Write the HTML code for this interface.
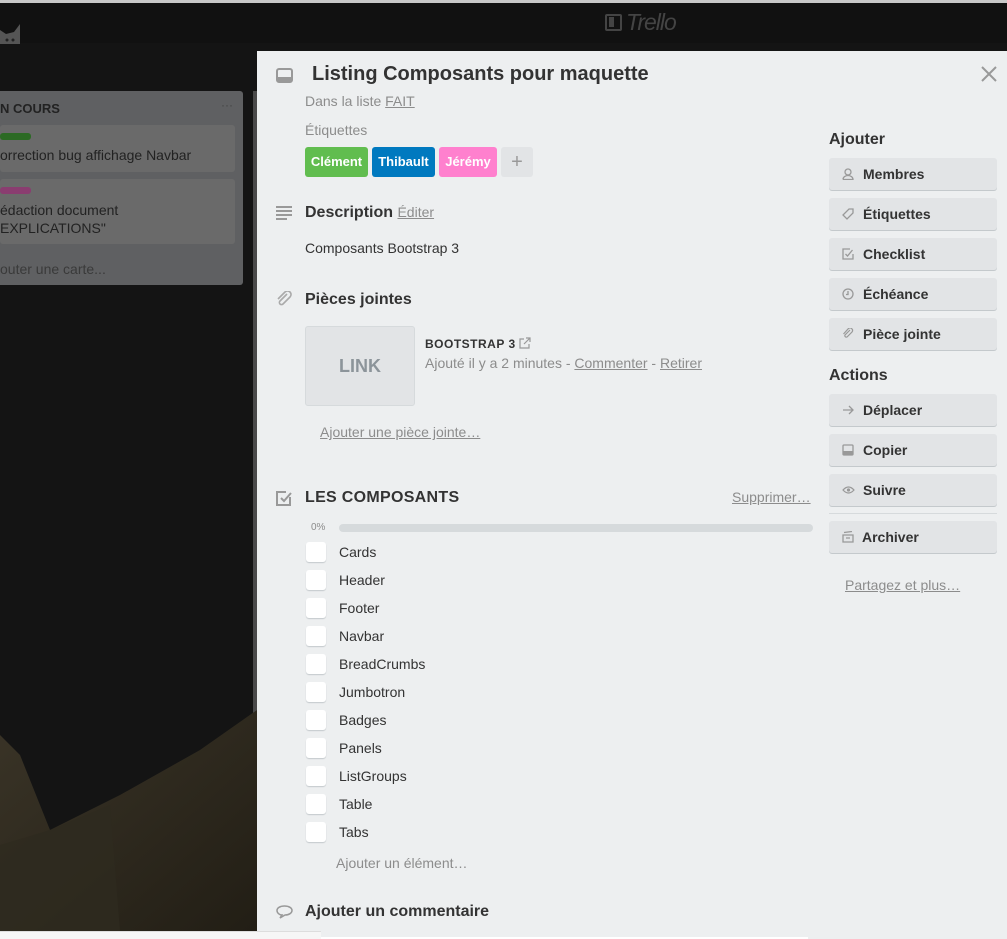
<!DOCTYPE html>
<html><head><meta charset="utf-8"><style>
*{box-sizing:border-box;margin:0;padding:0}
body{width:1007px;height:939px;overflow:hidden;background:#141414;font-family:"Liberation Sans",Arial,sans-serif;position:relative;color:#333}
.a{position:absolute}
.modal{left:257px;top:51px;width:750px;height:888px;background:#edeff0}
.btn{position:absolute;left:829px;width:168px;height:32px;background:#e2e4e6;border-radius:3px;box-shadow:0 1px 0 #c4c9cc;font-weight:bold;font-size:14px;color:#333;line-height:32px;padding-left:34px}
.btn svg{position:absolute;left:13px;top:10px}
.cb{position:absolute;left:306px;width:20px;height:20px;background:#fff;border-radius:3px;box-shadow:0 1px 1px #c4c9cc}
.it{position:absolute;left:339px;font-size:14px;color:#333}
.h{position:absolute;font-size:16px;font-weight:bold;color:#333}
.gray{color:#8c8c8c}
u{text-decoration:underline}
.lab{position:absolute;top:147px;height:30px;border-radius:3px;color:#fff;font-weight:bold;font-size:13px;line-height:30px;text-align:center}
</style></head><body>
<div class="a" style="left:0;top:0;width:1007px;height:3px;background:#c8c8c8"></div>
<div class="a" style="left:0;top:3px;width:1007px;height:40px;background:#111"></div>
<div class="a" style="left:605px;top:14px;width:17px;height:17px;border:2px solid #444;border-radius:2px"></div>
<div class="a" style="left:609px;top:17px;width:5px;height:10px;background:#444"></div>
<div class="a" style="left:626px;top:9px;font-size:23px;font-style:italic;color:#444;letter-spacing:-1px">Trello</div>
<svg class="a" style="left:0;top:22px" width="22" height="22"><path d="M0 22V8L6 12l8-2 6-8v20z" fill="#555"/><circle cx="7" cy="18" r="1.5" fill="#222"/><circle cx="13" cy="18" r="1.5" fill="#222"/></svg>
<div class="a" style="left:0;top:91px;width:243px;height:194px;background:#5f6062;border-radius:0 3px 3px 0"></div>
<div class="a" style="left:0;top:101px;font-size:13px;font-weight:bold;color:#222">N COURS</div>
<div class="a" style="left:221px;top:98px;font-size:12px;color:#444">···</div>
<div class="a" style="left:0;top:125px;width:235px;height:47px;background:#6a6a6a;border-radius:3px"></div>
<div class="a" style="left:0;top:133px;width:31px;height:7px;background:#2c6a24;border-radius:3px"></div>
<div class="a" style="left:0;top:147px;font-size:14px;color:#222">orrection bug affichage Navbar</div>
<div class="a" style="left:0;top:179px;width:235px;height:65px;background:#6a6a6a;border-radius:3px"></div>
<div class="a" style="left:0;top:187px;width:31px;height:7px;background:#8a3d70;border-radius:3px"></div>
<div class="a" style="left:0;top:201px;font-size:14px;color:#222;line-height:18px">édaction document<br>EXPLICATIONS"</div>
<div class="a" style="left:0;top:261px;font-size:14px;color:#3a3a3a">outer une carte...</div>
<div class="a" style="left:253px;top:91px;width:4px;height:760px;background:#4a4a4a"></div>
<svg class="a" style="left:0;top:690px" width="257" height="241"><defs><linearGradient id="g" x1="0" y1="0" x2="1" y2="1"><stop offset="0" stop-color="#3a3427"/><stop offset="1" stop-color="#221e15"/></linearGradient></defs><polygon points="0,45 20,65 50,140 120,105 200,60 257,20 257,241 0,241" fill="url(#g)"/><polygon points="0,155 50,140 110,115 120,241 0,241" fill="#2e2a1f" opacity=".8"/></svg>
<div class="a modal"></div>
<div class="a" style="left:0;top:931px;width:321px;height:8px;background:#f6f6f6;border-top:1px solid #ddd"></div>
<svg class="a" style="left:276px;top:68px" width="17" height="15"><rect x="1" y="1" width="15" height="13" rx="2" fill="none" stroke="#999" stroke-width="2"/><rect x="1" y="9" width="15" height="5" fill="#999"/></svg>
<div class="a" style="left:312px;top:63px;font-size:20px;font-weight:bold;color:#333">Listing Composants pour maquette</div>
<svg class="a" style="left:981px;top:66px" width="16" height="16"><path d="M1 1L15 15M15 1L1 15" stroke="#999" stroke-width="2"/></svg>
<div class="a gray" style="left:305px;top:93px;font-size:14px">Dans la liste <u>FAIT</u></div>
<div class="a gray" style="left:305px;top:122px;font-size:14px">Étiquettes</div>
<div class="lab" style="left:305px;width:63px;background:#61bd4f">Clément</div>
<div class="lab" style="left:372px;width:63px;background:#0079bf">Thibault</div>
<div class="lab" style="left:439px;width:58px;background:#ff80ce">Jérémy</div>
<div class="lab" style="left:501px;width:32px;background:#e2e4e6;color:#999;font-weight:normal;font-size:20px">+</div>
<svg class="a" style="left:276px;top:206px" width="17" height="14"><path d="M0 1H16M0 5H16M0 9H16M0 13H11" stroke="#999" stroke-width="2"/></svg>
<div class="h" style="left:305px;top:204px">Description <span style="font-weight:normal;font-size:14px;color:#8c8c8c"><u>Éditer</u></span></div>
<div class="a" style="left:305px;top:240px;font-size:14px">Composants Bootstrap 3</div>
<svg class="a" style="left:276px;top:291px" width="16" height="16"><path d="M11 3L4 10a2 2 0 003 3l7-7a3.5 3.5 0 00-5-5L2 8" fill="none" stroke="#aaa" stroke-width="1.6"/></svg>
<div class="h" style="left:305px;top:291px">Pièces jointes</div>
<div class="a" style="left:305px;top:326px;width:110px;height:80px;background:#e2e4e6;border:1px solid #d6dadc;border-radius:3px;text-align:center;line-height:78px;font-size:18px;font-weight:bold;color:#8c949a">LINK</div>
<div class="a" style="left:425px;top:337px;font-size:12px;font-weight:bold;color:#333;letter-spacing:.5px">BOOTSTRAP 3 <svg width="12" height="12" style="vertical-align:-1px"><path d="M5 2H1v9h9V7M7 1h4v4M11 1L5 7" fill="none" stroke="#999" stroke-width="1.2"/></svg></div>
<div class="a gray" style="left:425px;top:355px;font-size:14px">Ajouté il y a 2 minutes - <u>Commenter</u> - <u>Retirer</u></div>
<div class="a gray" style="left:320px;top:424px;font-size:14px"><u>Ajouter une pièce jointe…</u></div>
<svg class="a" style="left:275px;top:489px" width="18" height="18"><path d="M15 8v8H2V3h9" fill="none" stroke="#999" stroke-width="2"/><path d="M6 9l3 3 7-8" fill="none" stroke="#999" stroke-width="2"/></svg>
<div class="h" style="left:305px;top:489px;letter-spacing:.3px">LES COMPOSANTS</div>
<div class="a gray" style="left:732px;top:489px;font-size:14px"><u>Supprimer…</u></div>
<div class="a gray" style="left:311px;top:522px;font-size:10px">0%</div>
<div class="a" style="left:339px;top:524px;width:474px;height:8px;background:#d6dadc;border-radius:4px"></div>
<div class="cb" style="top:542px"></div><div class="it" style="top:544px">Cards</div>
<div class="cb" style="top:570px"></div><div class="it" style="top:572px">Header</div>
<div class="cb" style="top:598px"></div><div class="it" style="top:600px">Footer</div>
<div class="cb" style="top:626px"></div><div class="it" style="top:628px">Navbar</div>
<div class="cb" style="top:654px"></div><div class="it" style="top:656px">BreadCrumbs</div>
<div class="cb" style="top:682px"></div><div class="it" style="top:684px">Jumbotron</div>
<div class="cb" style="top:710px"></div><div class="it" style="top:712px">Badges</div>
<div class="cb" style="top:738px"></div><div class="it" style="top:740px">Panels</div>
<div class="cb" style="top:766px"></div><div class="it" style="top:768px">ListGroups</div>
<div class="cb" style="top:794px"></div><div class="it" style="top:796px">Table</div>
<div class="cb" style="top:822px"></div><div class="it" style="top:824px">Tabs</div>
<div class="a gray" style="left:336px;top:855px;font-size:14px">Ajouter un élément…</div>
<svg class="a" style="left:276px;top:905px" width="17" height="14"><path d="M8.5 1C4 1 1 3 1 5.5S3.5 10 6 10L4 13l5-3c4 0 7-2 7-4.5S13 1 8.5 1z" fill="none" stroke="#999" stroke-width="1.5"/></svg>
<div class="h" style="left:305px;top:903px">Ajouter un commentaire</div>
<div class="a" style="left:321px;top:937px;width:487px;height:2px;background:#fff"></div>
<div class="a" style="left:829px;top:131px;font-size:16px;font-weight:bold;color:#333">Ajouter</div>
<div class="btn" style="top:158px"><svg width="12" height="12"><circle cx="6" cy="4" r="3" fill="none" stroke="#999" stroke-width="1.3"/><path d="M1 11.5h10a5 4 0 00-10 0" fill="none" stroke="#999" stroke-width="1.3"/></svg>Membres</div>
<div class="btn" style="top:198px"><svg width="12" height="12"><path d="M7 1h4v4l-6 6-4-4z" fill="none" stroke="#999" stroke-width="1.3"/></svg>Étiquettes</div>
<div class="btn" style="top:238px"><svg width="12" height="12"><path d="M11 6v5H1V1h7" fill="none" stroke="#999" stroke-width="1.3"/><path d="M3.5 6l2 2 5-6" fill="none" stroke="#999" stroke-width="1.3"/></svg>Checklist</div>
<div class="btn" style="top:278px"><svg width="12" height="12"><circle cx="6" cy="6" r="5" fill="none" stroke="#999" stroke-width="1.3"/><path d="M6 3v3.5H4" fill="none" stroke="#999" stroke-width="1.3"/></svg>Échéance</div>
<div class="btn" style="top:318px"><svg width="12" height="12"><path d="M8 2L3 7a1.5 1.5 0 002 2l5-5a2.5 2.5 0 00-3.5-3.5L1.5 6" fill="none" stroke="#999" stroke-width="1.2"/></svg>Pièce jointe</div>
<div class="a" style="left:829px;top:367px;font-size:16px;font-weight:bold;color:#333">Actions</div>
<div class="btn" style="top:394px"><svg width="12" height="12"><path d="M1 6h10M7 2l4 4-4 4" fill="none" stroke="#999" stroke-width="1.3"/></svg>Déplacer</div>
<div class="btn" style="top:434px"><svg width="12" height="12"><rect x="1" y="1" width="10" height="10" rx="1" fill="none" stroke="#999" stroke-width="1.3"/><rect x="1" y="7" width="10" height="4" fill="#999"/></svg>Copier</div>
<div class="btn" style="top:474px"><svg width="13" height="12"><path d="M1 6q5.5-6 11 0q-5.5 6-11 0z" fill="none" stroke="#999" stroke-width="1.2"/><circle cx="6.5" cy="6" r="1.6" fill="#999"/></svg>Suivre</div>
<div class="a" style="left:829px;top:513px;width:168px;height:1px;background:#d6dadc"></div>
<div class="btn" style="top:521px;padding-left:33px"><svg width="12" height="12"><path d="M1 4h10v7H1zM4 7h4M2 1.5l8-1" fill="none" stroke="#999" stroke-width="1.3"/></svg>Archiver</div>
<div class="a gray" style="left:845px;top:577px;font-size:14px"><u>Partagez et plus…</u></div>
</body></html>
